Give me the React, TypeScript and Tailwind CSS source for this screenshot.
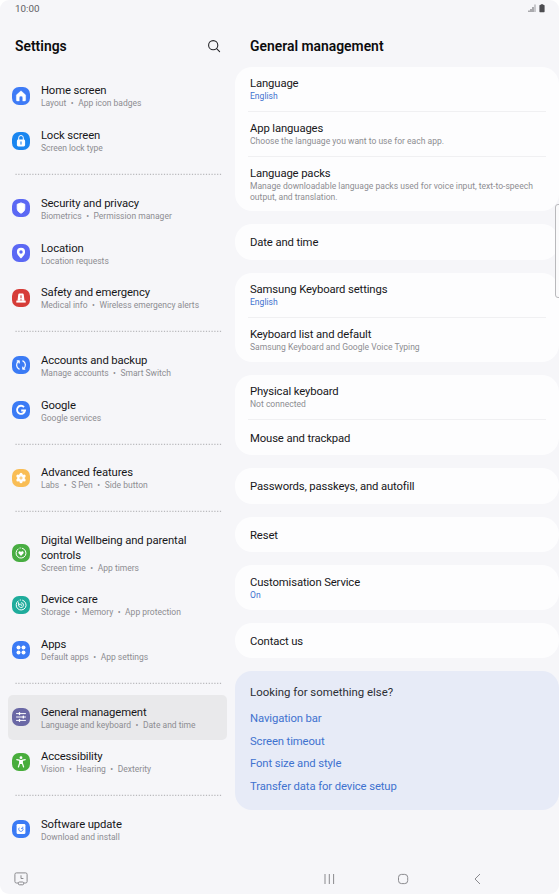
import type { ReactNode } from 'react';

type MenuItem = {
  title: string;
  sub: string[];
  color: string;
  icon: ReactNode;
  tall?: boolean;
  active?: boolean;
};

type Row = {
  title: string;
  sub?: string;
  blue?: boolean;
  height: string;
};

// every glyph is drawn on an 18x18 tile
const icons = {
  home: <path d="M9 3.8 4.3 7.9v5.2c0 .6.4 1 1 1h2v-3.3a1.7 1.7 0 0 1 3.4 0v3.3h2c.6 0 1-.4 1-1V7.9z" fill="#fff" stroke="#fff" strokeWidth=".3" strokeLinejoin="round" />,
  lock: (
    <>
      <path d="M6.7 8V5.8a2.3 2.3 0 0 1 4.6 0V8" fill="none" stroke="#fff" strokeWidth="1" />
      <rect x="4.9" y="7.6" width="8.2" height="6.8" rx="1.4" fill="#fff" />
      <path d="M9 9.9v2.2" stroke="#1a86f0" strokeWidth="1.1" strokeLinecap="round" />
    </>
  ),
  shield: <path d="M9 3.9 5.2 5.3v4.2c0 2.2 1.6 3.8 3.8 4.7 2.2-.9 3.8-2.5 3.8-4.7V5.3z" fill="#fff" stroke="#fff" strokeWidth=".9" strokeLinejoin="round" />,
  pin: <path fillRule="evenodd" d="M9 3.8a4.1 4.1 0 0 0-4.1 4.1c0 2.5 2.2 4.6 4.1 6.7 1.9-2.1 4.1-4.2 4.1-6.7A4.1 4.1 0 0 0 9 3.8zm0 2.5a1.7 1.7 0 1 1 0 3.4 1.7 1.7 0 0 1 0-3.4z" fill="#fff" />,
  siren: (
    <>
      <path d="M5.5 11.8 6.2 6c.1-.9.7-1.4 1.5-1.4h2.6c.8 0 1.4.5 1.5 1.4l.7 5.8z" fill="#fff" />
      <path d="M4.3 11.6h9.4v2H4.3z" fill="#fff" />
      <path d="M9 6.3v2.9M9 10.3v1.1" stroke="#d63c38" strokeWidth="1.1" />
    </>
  ),
  sync: (
    <g fill="none" stroke="#fff" strokeWidth="1.2" strokeLinecap="round" strokeLinejoin="round">
      <path d="M7.2 13.1A4.5 4.5 0 0 1 6.6 5.3M5.2 4.9h2v2" />
      <path d="M10.8 4.9a4.5 4.5 0 0 1 .6 7.8M12.8 13.1h-2v-2" />
    </g>
  ),
  google: <path d="M12 6.1A4 4 0 1 0 13 9.5H9.2" fill="none" stroke="#fff" strokeWidth="1.9" />,
  flower: (
    <>
      <g fill="#fff">
        <circle cx="9" cy="9" r="3.8" />
        <circle cx="9" cy="5.3" r="1.5" />
        <circle cx="9" cy="12.7" r="1.5" />
        <circle cx="5.8" cy="7.1" r="1.5" />
        <circle cx="12.2" cy="7.1" r="1.5" />
        <circle cx="5.8" cy="10.9" r="1.5" />
        <circle cx="12.2" cy="10.9" r="1.5" />
      </g>
      <path d="M9 7.3v3.4M7.3 9h3.4" stroke="#f9bd55" strokeWidth=".9" />
    </>
  ),
  wellbeing: (
    <>
      <path d="M10.2 4.2a5 5 0 1 1-4 .7M8 4l.3 0" fill="none" stroke="#fff" strokeWidth="1" strokeLinecap="round" />
      <path d="M9 11.9 6.7 9.6a1.4 1.4 0 0 1 0-1.9c.6-.6 1.7-.6 2.3.3.6-.9 1.7-.9 2.3-.3.5.5.5 1.4 0 1.9z" fill="#fff" />
    </>
  ),
  care: (
    <g fill="none" stroke="#fff" strokeLinecap="round">
      <path d="M10.6 4.2a5 5 0 1 1-4.4.7M8.2 4l.3 0" strokeWidth="1" />
      <path d="M6.7 8.2a2.5 2.5 0 1 0 2.9-1.6M6.5 6.7v1.6h1.6" strokeWidth=".9" />
      <path d="M9 8v1.3h.9" strokeWidth=".8" />
    </g>
  ),
  apps: (
    <g fill="#fff">
      <circle cx="6.5" cy="6.5" r="2" />
      <circle cx="11.5" cy="6.5" r="2" />
      <circle cx="6.5" cy="11.5" r="2" />
      <circle cx="11.5" cy="11.5" r="2" />
    </g>
  ),
  sliders: (
    <g stroke="#fff" strokeWidth="1" strokeLinecap="round">
      <path d="M4.5 5.6h9M4.5 9h9M4.5 12.4h9" />
      <path d="M7.5 4.7v1.8M11.3 8.1v1.8M7.5 11.5v1.8" strokeWidth="1.4" />
    </g>
  ),
  person: (
    <>
      <circle cx="9" cy="4.7" r="1.4" fill="#fff" />
      <path d="M4.8 6.7 7.8 7.3v2.4L6.4 14M13.2 6.7l-3 .6v2.4l1.4 4.3" fill="none" stroke="#fff" strokeWidth="1.2" strokeLinecap="round" />
      <path d="M7.3 6.9h3.4v2.7l.3 1.4H7l.3-1.4z" fill="#fff" />
    </>
  ),
  update: (
    <>
      <rect x="4.6" y="4" width="8.8" height="10" rx="1.3" fill="#fff" />
      <path d="M7.3 7.7a2.2 2.2 0 1 0 3.8 1.1M9 8.4h1.8V6.7" fill="none" stroke="#3b7bf5" strokeWidth=".9" />
    </>
  ),
};

const menu: MenuItem[][] = [
  [
    { title: 'Home screen', sub: ['Layout', 'App icon badges'], color: '#3e7bf6', icon: icons.home },
    { title: 'Lock screen', sub: ['Screen lock type'], color: '#1a86f0', icon: icons.lock },
  ],
  [
    { title: 'Security and privacy', sub: ['Biometrics', 'Permission manager'], color: '#5b68f4', icon: icons.shield },
    { title: 'Location', sub: ['Location requests'], color: '#5b68f4', icon: icons.pin },
    { title: 'Safety and emergency', sub: ['Medical info', 'Wireless emergency alerts'], color: '#d63c38', icon: icons.siren },
  ],
  [
    { title: 'Accounts and backup', sub: ['Manage accounts', 'Smart Switch'], color: '#3b7bf5', icon: icons.sync },
    { title: 'Google', sub: ['Google services'], color: '#3b7bf5', icon: icons.google },
  ],
  [{ title: 'Advanced features', sub: ['Labs', 'S Pen', 'Side button'], color: '#f9bd55', icon: icons.flower }],
  [
    { title: 'Digital Wellbeing and parental controls', sub: ['Screen time', 'App timers'], color: '#48ad42', icon: icons.wellbeing, tall: true },
    { title: 'Device care', sub: ['Storage', 'Memory', 'App protection'], color: '#1fac9c', icon: icons.care },
    { title: 'Apps', sub: ['Default apps', 'App settings'], color: '#3b7bf5', icon: icons.apps },
  ],
  [
    { title: 'General management', sub: ['Language and keyboard', 'Date and time'], color: '#6a68a5', icon: icons.sliders, active: true },
    { title: 'Accessibility', sub: ['Vision', 'Hearing', 'Dexterity'], color: '#48ad3c', icon: icons.person },
  ],
  [{ title: 'Software update', sub: ['Download and install'], color: '#3b7bf5', icon: icons.update }],
];

const cards: Row[][] = [
  [
    { title: 'Language', sub: 'English', blue: true, height: 'h-[44.7px]' },
    { title: 'App languages', sub: 'Choose the language you want to use for each app.', height: 'h-[44.7px]' },
    {
      title: 'Language packs',
      sub: 'Manage downloadable language packs used for voice input, text-to-speech output, and translation.',
      height: 'h-[55px]',
    },
  ],
  [{ title: 'Date and time', height: 'h-9' }],
  [
    { title: 'Samsung Keyboard settings', sub: 'English', blue: true, height: 'h-[44.5px]' },
    { title: 'Keyboard list and default', sub: 'Samsung Keyboard and Google Voice Typing', height: 'h-[44.5px]' },
  ],
  [
    { title: 'Physical keyboard', sub: 'Not connected', height: 'h-[44.5px]' },
    { title: 'Mouse and trackpad', height: 'h-[35.5px]' },
  ],
  [{ title: 'Passwords, passkeys, and autofill', height: 'h-[35.7px]' }],
  [{ title: 'Reset', height: 'h-[35.4px]' }],
  [{ title: 'Customisation Service', sub: 'On', blue: true, height: 'h-[44.6px]' }],
  [{ title: 'Contact us', height: 'h-[35.4px]' }],
];

const links = ['Navigation bar', 'Screen timeout', 'Font size and style', 'Transfer data for device setup'];

const Tile = ({ color, children }: { color: string; children: ReactNode }) => (
  <svg width="18.5" height="18" viewBox="0 0 18.5 18" className="shrink-0">
    <rect width="18" height="18" rx="7" fill={color} />
    {children}
  </svg>
);

const Divider = () => (
  <svg className="ml-[15px] block" width="207" height="22.7">
    <path d="M.5 11.3h206" stroke="#aaaaad" strokeWidth="1" strokeDasharray="1.2 1.6" />
  </svg>
);

const Item = ({ item }: { item: MenuItem }) => (
  <div
    className={`ml-2 flex w-[219px] items-center gap-[10px] rounded-[5px] pl-[4.4px] ${item.tall ? 'h-[59.8px]' : 'h-[44.8px]'} ${
      item.active ? 'bg-[#e9e9eb]' : ''
    }`}
  >
    <Tile color={item.color}>{item.icon}</Tile>
    <div className="w-[170px] pt-px">
      <p className="text-[11.3px] leading-[15px] tracking-[-.12px] text-[#17171a]">{item.title}</p>
      <p className="flex text-[8.5px] leading-[11px] whitespace-nowrap text-[#8d8d92]">
        {item.sub.map((s, i) => (
          <span key={s}>
            {i > 0 && <span className="mx-[4.5px]">•</span>}
            {s}
          </span>
        ))}
      </p>
    </div>
  </div>
);

const App = () => {
  return (
    <div className="h-[894px] w-[559px] overflow-hidden bg-white font-['Roboto',sans-serif]">
      <div className="relative flex h-[894px] flex-col overflow-hidden rounded-[9px] bg-[#f6f6f9]">
        {/* Status bar */}
        <div className="flex h-4 items-center justify-between pr-[14px] pl-[15px]">
          <span className="pt-[2px] text-[9.8px] text-[#5f5f63]">10:00</span>
          <svg width="17" height="10" viewBox="0 0 17 10">
            <path d="M1 9V7.5M3 9V6M5 9V4" stroke="#77777b" strokeWidth="1.2" />
            <path d="M7 9V1.5" stroke="#aaaaad" strokeWidth="1.2" />
            <path d="M12.7 1.2h2.6v.9h.8q.5 0 .5.5v6q0 .7-.6.7h-4q-.6 0-.6-.7v-6q0-.5.5-.5h.8z" fill="#4c4c50" />
          </svg>
        </div>

        <div className="flex grow">
          {/* Settings list */}
          <div className="w-[235px] shrink-0">
            <div className="flex h-[57.6px] items-center justify-between pt-[3px] pr-[14px] pl-[15px]">
              <h1 className="text-[13.9px] font-semibold text-[#0c0c0e]">Settings</h1>
              <svg width="14" height="14" viewBox="0 0 14 14" fill="none" stroke="#26262a" strokeWidth="1.1" strokeLinecap="round">
                <circle cx="6.2" cy="6.2" r="4.6" />
                <path d="m9.6 9.6 3 3" />
              </svg>
            </div>
            {menu.map((group, i) => (
              <div key={group[0].title}>
                {i > 0 && <Divider />}
                {group.map((item) => (
                  <Item key={item.title} item={item} />
                ))}
              </div>
            ))}
          </div>

          {/* Detail pane */}
          <div className="w-[324px]">
            <h2 className="flex h-[50.5px] items-center pt-[10px] pl-[15px] text-[13.9px] font-semibold text-[#0c0c0e]">General management</h2>
            <div className="flex flex-col gap-[13px]">
              {cards.map((rows) => (
                <div key={rows[0].title} className="rounded-[17px] bg-[#fdfdfe] px-[13px]">
                  {rows.map((row, i) => (
                    <div
                      key={row.title}
                      className={`flex flex-col justify-center pl-[2px] ${row.sub ? 'pt-[.7px]' : 'pt-[1.6px]'} ${row.height} ${i > 0 ? 'border-t border-[#f0f0f2]' : ''}`}
                    >
                      <p className="text-[11.3px] leading-[15px] tracking-[-.13px] text-[#17171a]">{row.title}</p>
                      {row.sub && (
                        <p className={`text-[8.55px] leading-[11px] ${row.blue ? 'text-[#3f72cf]' : 'text-[#8d8d92]'}`}>{row.sub}</p>
                      )}
                    </div>
                  ))}
                </div>
              ))}
              <div className="h-[139px] rounded-[17px] bg-[#e7ebf7] px-[15px] pt-[14px]">
                <p className="text-[11.4px] leading-[15px] text-[#2c2e35]">Looking for something else?</p>
                <div className="mt-[8px] text-[11.3px] tracking-[-.11px] text-[#3f72cf]">
                  {links.map((link) => (
                    <p key={link} className="leading-[22.7px]">{link}</p>
                  ))}
                </div>
              </div>
            </div>
          </div>
        </div>

        {/* Navigation bar */}
        <div className="flex h-[30px] shrink-0 items-center">
          <svg className="ml-[14px]" width="14" height="14" viewBox="0 0 14 14" fill="none" stroke="#8a8a8e" strokeWidth="1">
            <path d="M4 11H2.4Q.9 11 .9 9.5V2.4Q.9.9 2.4.9h9.2q1.5 0 1.5 1.5v7.1q0 1.5-1.5 1.5H10" />
            <rect x="4.4" y="10" width="5.2" height="2.8" rx="1" />
            <path d="M7 3.3v3.2h2.4" />
          </svg>
          <svg className="ml-[296px]" width="160" height="14" viewBox="0 0 160 14" fill="none" stroke="#8a8a8e" strokeWidth="1">
            <path d="M1 2v10M5.3 2v10M9.6 2v10" />
            <rect x="74.5" y="2.4" width="9.2" height="9.2" rx="3" />
            <path d="m156 2-5 5 5 5" />
          </svg>
        </div>

        {/* Edge panel handle */}
        <div className="absolute top-[204px] -right-[3px] h-[94px] w-[7px] rounded-[3px] border border-[#b9b9bc] bg-[#fafafb]" />
      </div>
    </div>
  );
};

export default App;
